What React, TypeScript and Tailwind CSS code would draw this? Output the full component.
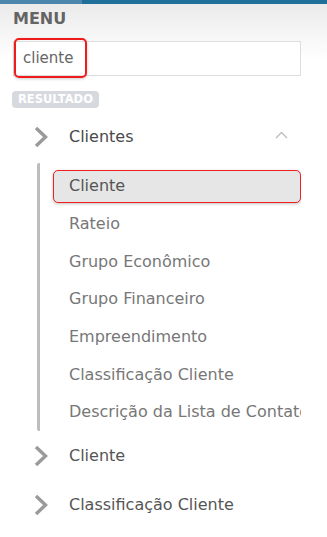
import React from "react";

const Chevron = () => (
  <svg width="16" height="24" viewBox="0 0 16 24" className="shrink-0">
    <path d="M3 3 L12.5 12 L3 21" fill="none" stroke="#9a9a9a" strokeWidth="3.4" strokeLinejoin="miter" />
  </svg>
);

const ChevronUp = () => (
  <svg width="13" height="8" viewBox="0 0 13 8">
    <path d="M1 7 L6.5 1.5 L12 7" fill="none" stroke="#bdbdbd" strokeWidth="1.4" />
  </svg>
);

const subItems = [
  "Rateio",
  "Grupo Econômico",
  "Grupo Financeiro",
  "Empreendimento",
  "Classificação Cliente",
  "Descrição da Lista de Contatos",
];

export default function App() {
  return (
    <div
      className="relative w-[327px] h-[537px] overflow-hidden bg-[linear-gradient(#e9e9e9,#ffffff_60px)]"
      style={{ fontFamily: '"DejaVu Sans", sans-serif' }}
    >
      <div className="flex h-[4px]">
        <div className="w-[82px] bg-[#4c86ad]" />
        <div className="flex-1 bg-[#1f6f9b]" />
      </div>

      <div className="pl-[13px] pt-[4px] text-[16px] font-bold leading-[22px] text-[#646464]">MENU</div>

      <div className="relative ml-[13px] mt-[11px] h-[35px] w-[288px] border border-[#dedede] bg-white">
        <div className="absolute left-[9px] top-0 flex h-full items-center text-[15px] text-[#666]">cliente</div>
        <div className="absolute left-[0px] top-[-4px] h-[40px] w-[73px] rounded-[5px] border-2 border-[#f01c1c] shadow-[0_1px_3px_rgba(0,0,0,0.2)]" />
      </div>

      <div className="ml-[12px] mt-[15px] inline-flex h-[17px] items-center rounded-[4px] bg-[#d6d9de] px-[6px] text-[11.5px] font-bold text-white">
        RESULTADO
      </div>

      <div className="mt-[15px] flex h-[24px] items-center pl-[33px] pr-[39px]">
        <Chevron />
        <span className="ml-[20px] text-[16px] text-[#4a4a4a]">Clientes</span>
        <span className="ml-auto mt-[-4px]">
          <ChevronUp />
        </span>
      </div>

      <div className="ml-[37px] mt-[14px] flex w-[264px] border-l-[3px] border-[#bdbdbd] rounded-[2px]">
        <div className="flex-1 overflow-hidden pl-[13px] pt-[7px]">
          <div className="flex h-[33px] items-center rounded-[5px] border-[1.5px] border-[#ef2020] bg-[#e6e6e6] pl-[15px] text-[16px] text-[#555] shadow-[0_1px_3px_rgba(0,0,0,0.25)]">
            Cliente
          </div>
          <div className="mt-[2.5px]">
            {subItems.map((t) => (
              <div key={t} className="flex h-[37.6px] items-center whitespace-nowrap pl-[16px] text-[16px] text-[#777]">
                {t}
              </div>
            ))}
          </div>
        </div>
      </div>

      <div className="mt-[13px] flex h-[24px] items-center pl-[33px]">
        <Chevron />
        <span className="ml-[20px] text-[16px] text-[#555]">Cliente</span>
      </div>
      <div className="mt-[25px] flex h-[24px] items-center pl-[33px]">
        <Chevron />
        <span className="ml-[20px] text-[16px] text-[#555]">Classificação Cliente</span>
      </div>
    </div>
  );
}
